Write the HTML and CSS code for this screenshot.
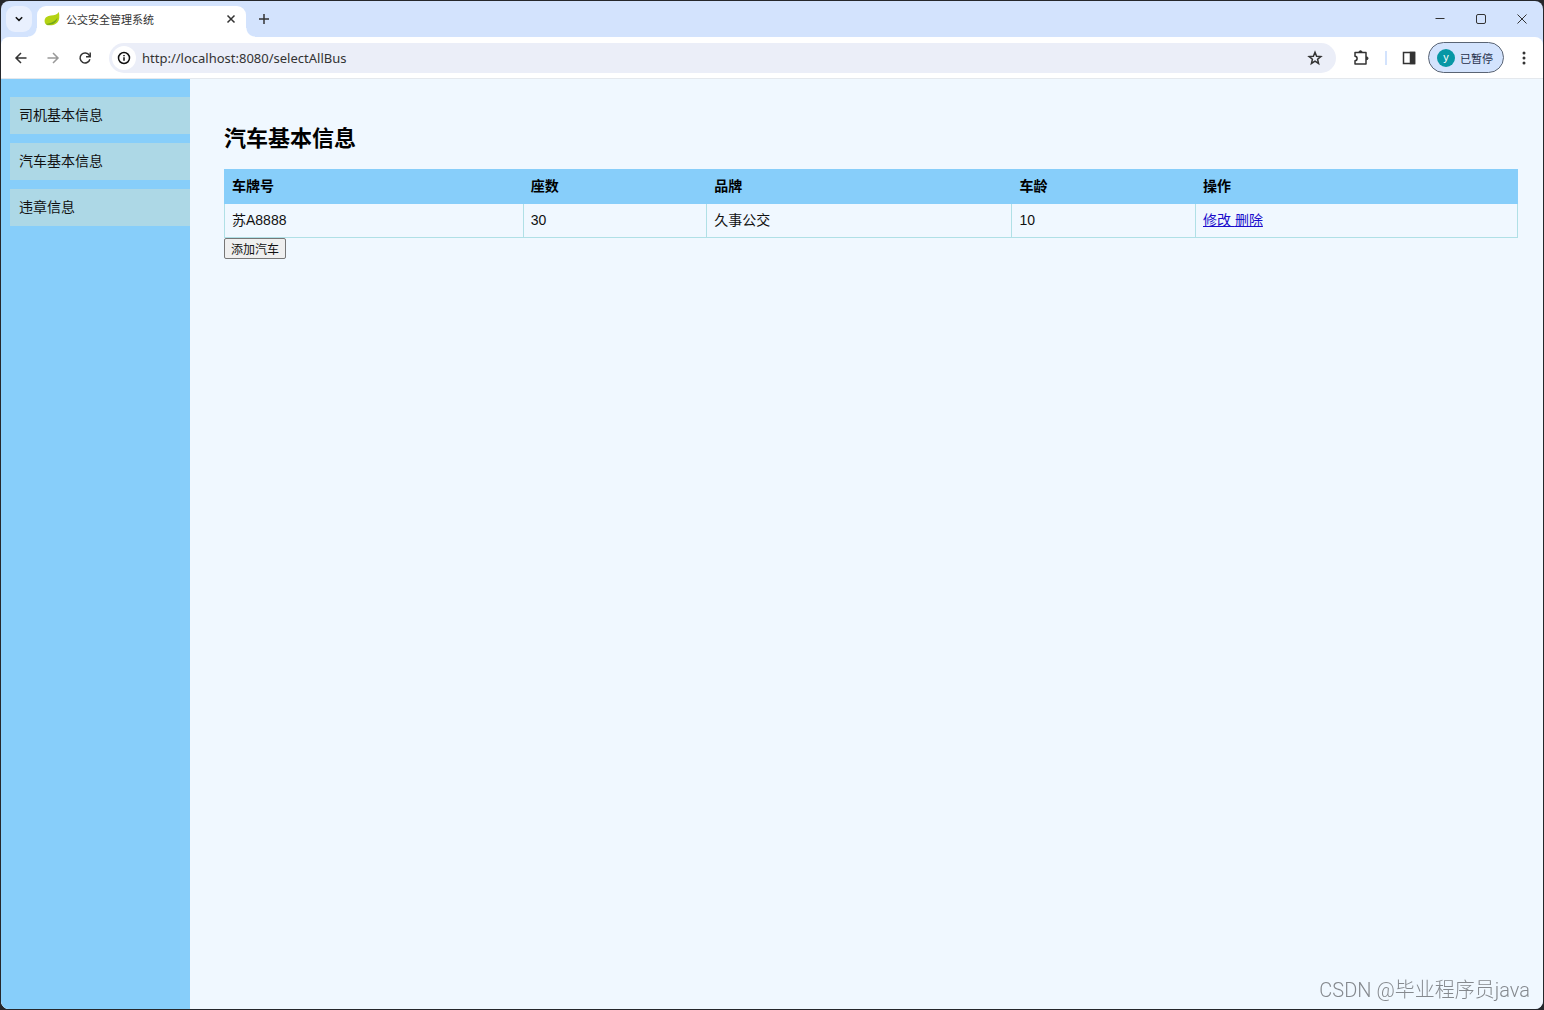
FILE: index.html
```html
<!DOCTYPE html>
<html lang="zh-CN">
<head>
<meta charset="utf-8">
<title>公交安全管理系统</title>
<link rel="stylesheet" href="styles.css">
</head>
<body>
<div class="window">
  <header class="tabstrip">
    <button class="tab-search" aria-label="搜索标签页"><svg width="10" height="10" viewBox="0 0 10 10"><path d="M1.800 3.200 5 6.400 8.200 3.200"/></svg></button>
    <div class="tab">
      <svg class="leaf" width="16" height="16" viewBox="0 0 16 16"><path d="M14.800 1c.9 4.200.8 8-1.400 10.600-2.400 2.800-6.600 3-9.900 2.600C1.300 13.600.4 11.700.6 9.600.9 6.400 3.500 5 7 4.600c3.300-.4 6-.9 7.800-3.600z" fill="#b5d313"/><path d="M1.500 12.800c5.500-.4 9.500-2.200 12-6.400-.5 4.500-3.500 7.300-10 7.300z" fill="#75a81c"/></svg>
      <span class="tab-title">公交安全管理系统</span>
      <button class="icon-btn tab-close" aria-label="关闭"><svg width="10" height="10" viewBox="0 0 10 10"><path d="m1.500 1.500 7 7m0-7-7 7"/></svg></button>
    </div>
    <button class="icon-btn new-tab" aria-label="新标签页"><svg width="12" height="12" viewBox="0 0 12 12"><path d="M6 1v10M1 6h10"/></svg></button>
    <div class="window-controls">
      <button class="icon-btn" aria-label="最小化"><svg width="12" height="12" viewBox="0 0 12 12"><path d="M1.500 5.500h9"/></svg></button>
      <button class="icon-btn" aria-label="最大化"><svg width="12" height="12" viewBox="0 0 12 12"><rect x="1.500" y="1.500" width="9" height="9" rx="1.500"/></svg></button>
      <button class="icon-btn" aria-label="关闭窗口"><svg width="12" height="12" viewBox="0 0 12 12"><path d="m1.500 1.500 9 9m0-9-9 9"/></svg></button>
    </div>
  </header>

  <div class="toolbar">
    <div class="nav-buttons">
      <button class="icon-btn" aria-label="后退"><svg width="14" height="14" viewBox="0 0 14 14"><path d="M12.500 7H2.200M7 2 2 7l5 5"/></svg></button>
      <button class="icon-btn muted" aria-label="前进"><svg width="14" height="14" viewBox="0 0 14 14"><path d="M1.500 7h10.300M7 2l5 5-5 5"/></svg></button>
      <button class="icon-btn" aria-label="重新加载"><svg width="14" height="14" viewBox="0 0 14 14"><path d="M11.900 8.200A5 5 0 1 1 11.300 4.300L12 5.400"/><path d="M12.200 1.500v4.200H8"/></svg></button>
    </div>
    <div class="address-bar">
      <button class="site-info" aria-label="网站信息"><svg width="14" height="14" viewBox="0 0 14 14"><circle cx="7" cy="7" r="5.500"/><path d="M7 6.300v3.500M7 4v1.300"/></svg></button>
      <input class="url" type="text" aria-label="地址" value="http://localhost:8080/selectAllBus">
      <button class="icon-btn" aria-label="加入书签"><svg width="16" height="16" viewBox="0 0 16 16"><path d="m8 2.200 1.600 4 4.300.3-3.300 2.800 1 4.200L8 11.200l-3.600 2.300 1-4.200-3.300-2.800 4.300-.3z"/></svg></button>
    </div>
    <div class="toolbar-actions">
      <button class="icon-btn" aria-label="扩展程序"><svg width="18" height="18" viewBox="0 0 18 18"><path d="M3 3.500h11v11.500H3v-3.300c2.800-.2 2.800-4.300 0-4.500z" stroke-linejoin="round"/><path d="M7 3.200a1.500 1.500 0 0 1 3 0zM14.500 7.800a1.500 1.500 0 0 1 0 3z" fill="#333" stroke-width="1"/></svg></button>
      <span class="divider"></span>
      <button class="icon-btn" aria-label="侧边栏"><svg width="14" height="14" viewBox="0 0 14 14"><rect x="1.500" y="1.500" width="11" height="11"/><path d="M8.500 1.500h4v11h-4z" fill="#333"/></svg></button>
    </div>
    <button class="profile"><span class="avatar">y</span><span>已暂停</span></button>
    <button class="icon-btn menu" aria-label="菜单"><svg width="4" height="14" viewBox="0 0 4 14"><g fill="#333" stroke="none"><circle cx="2" cy="2" r="1.500"/><circle cx="2" cy="7" r="1.500"/><circle cx="2" cy="12" r="1.500"/></g></svg></button>
  </div>

  <div class="page">
    <nav class="sidebar">
      <a href="#drivers">司机基本信息</a>
      <a href="#buses">汽车基本信息</a>
      <a href="#violations">违章信息</a>
    </nav>
    <main class="content">
      <h1>汽车基本信息</h1>
      <table class="bus-table">
        <colgroup><col class="col-plate"><col class="col-num"><col class="col-brand"><col class="col-num"><col></colgroup>
        <thead>
          <tr><th>车牌号</th><th>座数</th><th>品牌</th><th>车龄</th><th>操作</th></tr>
        </thead>
        <tbody>
          <tr><td>苏A8888</td><td>30</td><td>久事公交</td><td>10</td><td><a href="#edit">修改 </a><a href="#delete">删除</a></td></tr>
        </tbody>
      </table>
      <button class="add-bus">添加汽车</button>
    </main>
  </div>
</div>
<div class="watermark">CSDN @毕业程序员java</div>
</body>
</html>
```
FILE: styles.css
```css
* {
  box-sizing: border-box;
}

body {
  margin: 0;
  background: #25272b;
  color: #111;
  font-family: "Liberation Sans", "Noto Sans CJK SC", sans-serif;
  font-size: 14px;
}

button {
  padding: 0;
  border: 0;
  background: none;
  font-family: inherit;
  color: inherit;
}

svg {
  display: block;
  fill: none;
  stroke: currentColor;
  stroke-width: 1.5;
}

.window {
  display: flex;
  flex-direction: column;
  min-height: calc(100vh - 2px);
  margin: 1px;
  border-radius: 8px;
  overflow: hidden;
  background: #d3e3fd;
}

/* Tab strip */
.tabstrip {
  display: flex;
  align-items: center;
  height: 36px;
  padding-left: 5px;
}

.tab-search {
  display: grid;
  place-items: center;
  width: 26px;
  height: 26px;
  border-radius: 9px;
  background: #e9f0fe;
}

.tab {
  position: relative;
  display: flex;
  align-items: center;
  align-self: flex-end;
  width: 209px;
  height: 31px;
  margin-left: 5px;
  padding: 0 10px 6px 7px;
  border-radius: 9px 9px 0 0;
  background: #fff;
}

.tab::before,
.tab::after {
  content: "";
  position: absolute;
  bottom: 0;
  width: 9px;
  height: 9px;
}

.tab::before {
  right: 100%;
  background: radial-gradient(circle at 0 0, transparent 8px, #fff 9px);
}

.tab::after {
  left: 100%;
  background: radial-gradient(circle at 100% 0, transparent 8px, #fff 9px);
}

.leaf {
  stroke: none;
}

.tab-title {
  flex: 1;
  margin-left: 6px;
  font-size: 11px;
  color: #333;
}

.icon-btn {
  display: grid;
  place-items: center;
  flex: none;
  color: #333;
}

.new-tab {
  margin-left: 12px;
}

.window-controls {
  display: flex;
  gap: 29px;
  margin-left: auto;
  padding-right: 15px;
}

.window-controls svg {
  stroke-width: 1;
}

/* Toolbar */
.toolbar {
  display: flex;
  align-items: center;
  height: 42px;
  padding: 0 17px 0 13px;
  border-bottom: 1px solid #e4e8ed;
  border-radius: 8px 8px 0 0;
  background: #fff;
}

.nav-buttons {
  display: flex;
  gap: 18px;
}

.muted {
  color: #999;
}

.address-bar {
  display: flex;
  align-items: center;
  flex: 1;
  height: 30px;
  margin-left: 17px;
  padding: 0 13px 0 3px;
  border-radius: 15px;
  background: #ebeef8;
}

.site-info {
  display: grid;
  place-items: center;
  width: 24px;
  height: 24px;
  border-radius: 50%;
  background: #fff;
}

.url {
  flex: 1;
  margin-left: 6px;
  padding: 0;
  border: 0;
  outline: 0;
  background: none;
  font-family: "Noto Sans", sans-serif;
  font-size: 13px;
  color: #333;
}

.toolbar-actions {
  display: flex;
  align-items: center;
  gap: 15px;
  margin-left: 16px;
}

.divider {
  width: 2px;
  height: 14px;
  background: #d3e3fd;
}

.profile {
  display: flex;
  align-items: center;
  gap: 5px;
  height: 31px;
  margin-left: 12px;
  padding: 0 10px 0 8px;
  border: 1px solid #5a6474;
  border-radius: 16px;
  background: #d3e3fd;
  font-size: 11px;
  color: #1f2f4a;
}

.avatar {
  width: 18px;
  height: 18px;
  border-radius: 50%;
  background: #0797a5;
  line-height: 17px;
  text-align: center;
  color: #fff;
}

.menu {
  margin-left: 18px;
}

/* Page */
.page {
  display: flex;
  flex: 1;
  background: #f0f8ff;
}

.sidebar {
  display: flex;
  flex-direction: column;
  gap: 9px;
  width: 189px;
  padding: 18px 0 0 9px;
  background: #87cefa;
}

.sidebar a {
  padding-left: 9px;
  background: #add8e6;
  line-height: 37px;
  text-decoration: none;
  color: #111;
}

.content {
  flex: 1;
  padding: 43px 25px 25px 34px;
}

h1 {
  margin: 0 0 13px;
  font-size: 22px;
  line-height: 34px;
  color: #000;
}

.bus-table {
  width: 100%;
  border-collapse: collapse;
  table-layout: fixed;
}

.col-plate {
  width: 23.1%;
}

.col-num {
  width: 14.2%;
}

.col-brand {
  width: 23.6%;
}

.bus-table th,
.bus-table td {
  padding: 0 7px;
  border: 1px solid #b0e0e6;
  line-height: 33px;
  text-align: left;
}

.bus-table th {
  border-color: #87cefa;
  background: #87cefa;
  color: #000;
}

.bus-table a {
  color: #1a0dcb;
}

.add-bus {
  display: block;
  height: 21px;
  padding: 0 6px;
  border: 1px solid #767676;
  border-radius: 2px;
  background: #efefef;
  font-size: 12px;
}

.watermark {
  position: fixed;
  right: 14px;
  bottom: 6px;
  font-family: Roboto, "Noto Sans CJK SC", sans-serif;
  font-size: 20px;
  line-height: 28px;
  font-weight: 300;
  color: #85898e;
}
```
